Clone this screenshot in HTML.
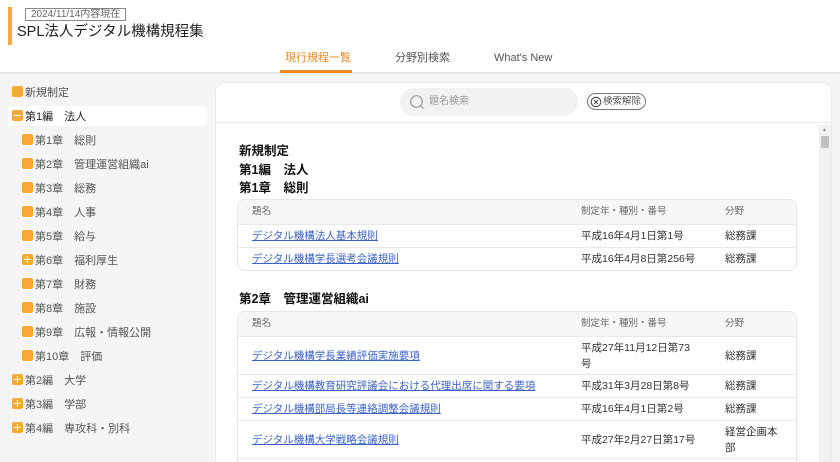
<!DOCTYPE html>
<html style="width:840px;height:462px;overflow:hidden"><head><meta charset="utf-8"><style>
*{box-sizing:border-box;margin:0;padding:0}
body{width:840px;height:462px;overflow:hidden;background:#f5f5f5;font-family:"Liberation Sans","Noto Sans CJK JP",sans-serif;position:relative;color:#333}
.a{position:absolute;white-space:nowrap}
.hdr{position:absolute;left:0;top:0;width:840px;height:74px;background:#fff;border-bottom:2px solid #e6e6e6}
.ic{position:absolute;width:11px;height:11px;background:#f9a93a;border-radius:2px}
.ic.m::after{content:"";position:absolute;left:2px;top:5px;width:7px;height:1.3px;background:#fff}
.ic.p::after{content:"";position:absolute;left:2px;top:5px;width:7px;height:1.3px;background:#fff}
.ic.p::before{content:"";position:absolute;left:5px;top:2px;width:1.3px;height:7px;background:#fff}
.st{font-size:11px;color:#555;line-height:15px;margin-top:2px}
.tab{font-size:11px;line-height:14px;top:51px}
.panel{position:absolute;left:215px;top:82px;width:617px;height:380px;background:#fff;border-radius:10px 10px 0 0;border:1px solid #eaeaea;border-bottom:none}
h3{position:absolute;left:239px;font-size:12.5px;font-weight:bold;color:#111;white-space:nowrap;line-height:16px}
.tb{position:absolute;left:237px;width:560px;border:1px solid #e6e6e6;border-radius:8px;overflow:hidden;background:#fff}
.tr{position:relative;border-top:1px solid #e8e8e8;font-size:10.5px}
.tr.h{border-top:none;background:#f6f7f8;color:#666;font-size:9.5px;height:24px}
.tr span{position:absolute;top:50%;transform:translateY(-50%);line-height:16px}
.c1{left:14px}.c2{left:343px;width:118px;white-space:normal}.c3{left:487px;width:60px;white-space:normal}
a{color:#3b63c4;text-decoration:underline}
</style></head><body>
<div class="hdr">
<div class="a" style="left:8px;top:7px;width:4px;height:38px;background:#f9a93a"></div>
<div class="a" style="left:25px;top:8px;height:13px;padding:0 5px;border:1px solid #888;font-size:10px;line-height:11px;color:#666">2024/11/14内容現在</div>
<div class="a" style="left:17px;top:23px;font-size:14.5px;line-height:18px;color:#222">SPL法人デジタル機構規程集</div>
<div class="a tab" style="left:285px;color:#f08a24">現行規程一覧</div>
<div class="a" style="left:280px;top:70px;width:72px;height:3px;background:#f08a24"></div>
<div class="a tab" style="left:395px;color:#555">分野別検索</div>
<div class="a tab" style="left:494px;color:#555">What's New</div>
</div>
<div class="a" style="left:8px;top:106px;width:199px;height:20px;background:#fff"></div>
<div class="ic" style="left:12px;top:86px"></div><div class="a st" style="left:25px;top:84px">新規制定</div>
<div class="ic m" style="left:12px;top:110px"></div><div class="a st" style="left:25px;top:108px;color:#222">第1編　法人</div>
<div class="ic" style="left:22px;top:134px"></div><div class="a st" style="left:35px;top:132px">第1章　総則</div>
<div class="ic" style="left:22px;top:158px"></div><div class="a st" style="left:35px;top:156px">第2章　管理運営組織ai</div>
<div class="ic" style="left:22px;top:182px"></div><div class="a st" style="left:35px;top:180px">第3章　総務</div>
<div class="ic" style="left:22px;top:206px"></div><div class="a st" style="left:35px;top:204px">第4章　人事</div>
<div class="ic" style="left:22px;top:230px"></div><div class="a st" style="left:35px;top:228px">第5章　給与</div>
<div class="ic p" style="left:22px;top:254px"></div><div class="a st" style="left:35px;top:252px">第6章　福利厚生</div>
<div class="ic" style="left:22px;top:278px"></div><div class="a st" style="left:35px;top:276px">第7章　財務</div>
<div class="ic" style="left:22px;top:302px"></div><div class="a st" style="left:35px;top:300px">第8章　施設</div>
<div class="ic" style="left:22px;top:326px"></div><div class="a st" style="left:35px;top:324px">第9章　広報・情報公開</div>
<div class="ic" style="left:22px;top:350px"></div><div class="a st" style="left:35px;top:348px">第10章　評価</div>
<div class="ic p" style="left:12px;top:374px"></div><div class="a st" style="left:25px;top:372px">第2編　大学</div>
<div class="ic p" style="left:12px;top:398px"></div><div class="a st" style="left:25px;top:396px">第3編　学部</div>
<div class="ic p" style="left:12px;top:422px"></div><div class="a st" style="left:25px;top:420px">第4編　専攻科・別科</div>

<div class="panel"></div>
<div class="a" style="left:216px;top:122px;width:615px;height:1px;background:#ececec"></div>
<div class="a" style="left:400px;top:88px;width:178px;height:28px;background:#f2f2f2;border-radius:14px"></div>
<svg class="a" style="left:409px;top:94px" width="16" height="16"><circle cx="7.5" cy="7.5" r="5.8" fill="none" stroke="#999" stroke-width="1.2"/><path d="M11.6 11.6L14.5 14.5" stroke="#999" stroke-width="1.2"/></svg>
<div class="a" style="left:429px;top:95px;font-size:10px;line-height:14px;color:#999">題名検索</div>
<div class="a" style="left:587px;top:93px;width:59px;height:17px;border:1px solid #777;border-radius:9px;font-size:9.5px;line-height:15px;color:#555;padding-left:15px">検索解除</div>
<svg class="a" style="left:590px;top:96px" width="12" height="12"><circle cx="6" cy="6" r="4.8" fill="none" stroke="#444" stroke-width="1"/><path d="M4 4L8 8M8 4L4 8" stroke="#444" stroke-width="1"/></svg>
<div class="a" style="left:819px;top:125px;width:12px;height:337px;background:#f1f1f1"></div>
<div class="a" style="left:821px;top:136px;width:8px;height:12px;background:#c1c1c1"></div>
<div class="a" style="left:822px;top:127px;font-size:5px;color:#888">▲</div>

<h3 style="top:143px">新規制定</h3>
<h3 style="top:162px">第1編　法人</h3>
<h3 style="top:180px">第1章　総則</h3>
<div class="tb" style="top:199px">
<div class="tr h"><span class="c1">題名</span><span class="c2">制定年・種別・番号</span><span class="c3">分野</span></div>
<div class="tr" style="height:23px"><span class="c1"><a>デジタル機構法人基本規則</a></span><span class="c2">平成16年4月1日第1号</span><span class="c3">総務課</span></div>
<div class="tr" style="height:23px"><span class="c1"><a>デジタル機構学長選考会議規則</a></span><span class="c2">平成16年4月8日第256号</span><span class="c3">総務課</span></div>
</div>
<h3 style="top:291px">第2章　管理運営組織ai</h3>
<div class="tb" style="top:311px;height:151px;border-bottom:none;border-radius:8px 8px 0 0">
<div class="tr h"><span class="c1">題名</span><span class="c2">制定年・種別・番号</span><span class="c3">分野</span></div>
<div class="tr" style="height:38px"><span class="c1"><a>デジタル機構学長業績評価実施要項</a></span><span class="c2">平成27年11月12日第73号</span><span class="c3">総務課</span></div>
<div class="tr" style="height:23px"><span class="c1"><a>デジタル機構教育研究評議会における代理出席に関する要項</a></span><span class="c2">平成31年3月28日第8号</span><span class="c3">総務課</span></div>
<div class="tr" style="height:23px"><span class="c1"><a>デジタル機構部局長等連絡調整会議規則</a></span><span class="c2">平成16年4月1日第2号</span><span class="c3">総務課</span></div>
<div class="tr" style="height:38px"><span class="c1"><a>デジタル機構大学戦略会議規則</a></span><span class="c2">平成27年2月27日第17号</span><span class="c3">経営企画本部</span></div>
<div class="tr" style="height:5px"></div>
</div>
</body></html>
